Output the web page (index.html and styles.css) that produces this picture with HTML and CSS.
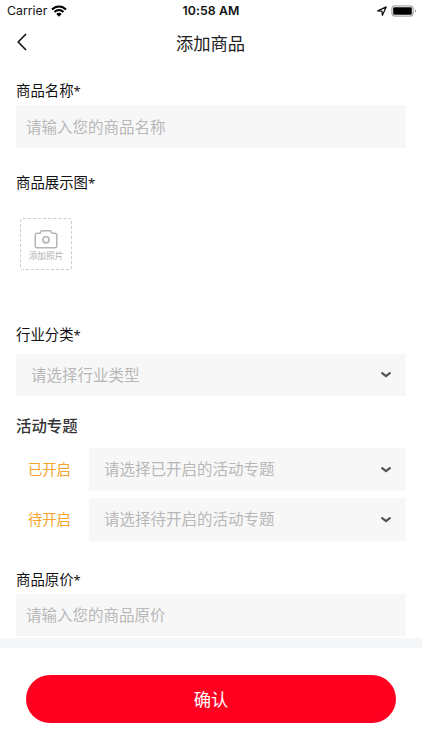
FILE: index.html
```html
<!DOCTYPE html>
<html lang="zh-CN">
<head>
<meta charset="utf-8">
<meta name="viewport" content="width=device-width, initial-scale=1">
<title>添加商品</title>
<link rel="stylesheet" href="styles.css">
</head>
<body>
<div class="screen">
  <header class="status">
    <div class="status-left">
      <span>Carrier</span>
      <svg class="wifi" viewBox="0 0 16 12"><path d="M1 4.500C5 .4 11 .4 15 4.500M3.500 7.100c2.700-2.600 6.300-2.600 9 0" fill="none" stroke="#000" stroke-width="2.100"/><path d="M5.300 8.900c1.600-1.400 3.800-1.400 5.400 0L8 11.700z"/></svg>
    </div>
    <time class="clock">10:58 AM</time>
    <div class="status-right">
      <svg class="location" viewBox="0 0 10 10"><path d="M.7 4.900 9.200.9 5.400 9.300 4.900 5.200z" fill="none" stroke="#111" stroke-width="1.250" stroke-linejoin="round"/></svg>
      <svg class="battery" viewBox="0 0 26 12"><rect x=".9" y=".9" width="21.200" height="10.200" rx="3" fill="#fff" stroke="#aaa" stroke-width="1.300"/><rect x="2.200" y="2.200" width="18.600" height="7.600" rx="1.400"/><path d="M23.900 4.300c1.500.7 1.500 2.800 0 3.500z" fill="#999"/></svg>
    </div>
  </header>
  <nav class="nav">
    <svg class="back" viewBox="0 0 10 18"><path d="M9 1 1.200 9 9 17" fill="none" stroke="#111" stroke-width="1.600"/></svg>
    <h1 class="title">添加商品</h1>
  </nav>
  <main class="form">
    <label class="label">商品名称<span class="required">*</span></label>
    <div class="field">请输入您的商品名称</div>

    <label class="label label-photo">商品展示图<span class="required">*</span></label>
    <div class="upload">
      <svg class="camera" viewBox="0 0 24 20"><path d="M3.200 4.200h3L7.600 1.700h8.800l1.400 2.500h3a2 2 0 0 1 2 2v10.500a2 2 0 0 1-2 2H3.200a2 2 0 0 1-2-2V6.200a2 2 0 0 1 2-2z" fill="none" stroke="#b4b4b4" stroke-width="1.500" stroke-linejoin="round"/><circle cx="12" cy="10.800" r="3.100" fill="none" stroke="#b4b4b4" stroke-width="1.600"/></svg>
      <span class="upload-text">添加照片</span>
    </div>

    <label class="label label-category">行业分类<span class="required">*</span></label>
    <div class="field select">请选择行业类型<svg class="chevron" viewBox="0 0 10 6"><path d="m1.200 1.200 3.800 3 3.800-3"/></svg></div>

    <h2 class="topic-title">活动专题</h2>
    <div class="topic">
      <span class="topic-name">已开启</span>
      <div class="field select">请选择已开启的活动专题<svg class="chevron" viewBox="0 0 10 6"><path d="m1.200 1.200 3.800 3 3.800-3"/></svg></div>
    </div>
    <div class="topic">
      <span class="topic-name">待开启</span>
      <div class="field select">请选择待开启的活动专题<svg class="chevron" viewBox="0 0 10 6"><path d="m1.200 1.200 3.800 3 3.800-3"/></svg></div>
    </div>

    <label class="label label-price">商品原价<span class="required">*</span></label>
    <div class="field">请输入您的商品原价</div>
  </main>
  <footer class="footer">
    <button class="confirm" type="button">确认</button>
  </footer>
</div>
</body>
</html>
```
FILE: styles.css
```css
* { box-sizing: border-box; }

body {
  margin: 0;
  background: #fff;
  font-family: "Noto Sans CJK SC", sans-serif;
  color: #111;
}

svg { display: block; flex: none; }

.screen {
  display: flex;
  flex-direction: column;
  width: 422px;
  height: 750px;
  overflow: hidden;
}

.status {
  display: grid;
  grid-template-columns: 1fr auto 1fr;
  align-items: center;
  height: 22px;
  padding: 0 5px 0 7px;
  font: 12.3px/22px Inter, sans-serif;
}

.status-left,
.status-right {
  display: flex;
  align-items: center;
}

.status-left { gap: 4px; }
.status-right { justify-content: flex-end; gap: 4px; }
.wifi { width: 16px; height: 12px; margin-top: -1px; }
.location { width: 10px; height: 10px; }
.battery { width: 26px; height: 12px; margin-top: -1px; }
.clock { margin-right: 2px; font-weight: 600; letter-spacing: 0.1px; }

.nav {
  display: grid;
  grid-template-columns: 40px 1fr 40px;
  align-items: center;
  height: 42px;
}

.back {
  width: 10px;
  height: 18px;
  margin: -2px 0 0 17px;
}

.title {
  margin: 0;
  padding-right: 1px;
  font-size: 17.3px;
  font-weight: 400;
  line-height: 26px;
  text-align: center;
  color: #222;
}

.form {
  height: 574px;
  padding: 15px 16px 0;
}

.label {
  display: block;
  height: 26.4px;
  font-size: 14.4px;
  line-height: 21px;
}

.required {
  font-family: "Noto Sans", sans-serif;
  font-size: 13px;
  line-height: 1;
}

.label-photo { margin-top: 23px; }
.label-category { margin-top: 53px; height: 30.6px; }
.label-price { margin-top: 27px; }

.field {
  display: flex;
  align-items: center;
  height: 42.5px;
  padding: 0 10px 2px;
  background: #f7f7f7;
  font-size: 15.5px;
  color: #b8b8b8;
}

.select {
  justify-content: space-between;
  padding: 0 15px 2px;
}

.chevron {
  width: 10px;
  height: 6px;
  margin-top: 3px;
  fill: none;
  stroke: #555;
  stroke-width: 2.2;
  stroke-linecap: round;
}

.upload {
  display: flex;
  flex-direction: column;
  align-items: center;
  width: 52px;
  height: 52px;
  margin: 20.8px 0 0 4px;
  padding-top: 10px;
  border: 1px dashed #ccc;
  border-radius: 3px;
}

.camera { width: 24px; height: 20px; }

.upload-text {
  font-size: 8.7px;
  line-height: 14px;
  color: #b0b0b0;
}

.topic-title {
  height: 33px;
  margin: 18.9px 0 0;
  font-size: 15.4px;
  font-weight: 500;
  line-height: 21px;
  color: #333;
}

.topic {
  display: grid;
  grid-template-columns: 73px 1fr;
  align-items: center;
}

.topic + .topic { margin-top: 7.5px; }

.topic-name {
  padding: 0 0 1px 12px;
  font-size: 14.3px;
  color: #f5a32b;
}

.footer {
  flex: 1;
  padding: 27px 26px 0;
  border-top: 10px solid #f5f6f8;
}

.confirm {
  display: block;
  width: 100%;
  height: 48px;
  padding: 0 0 1px;
  border: 0;
  border-radius: 24px;
  background: #ff0020;
  font: 17.3px/46px "Noto Sans CJK SC", sans-serif;
  color: #fff;
}
```
